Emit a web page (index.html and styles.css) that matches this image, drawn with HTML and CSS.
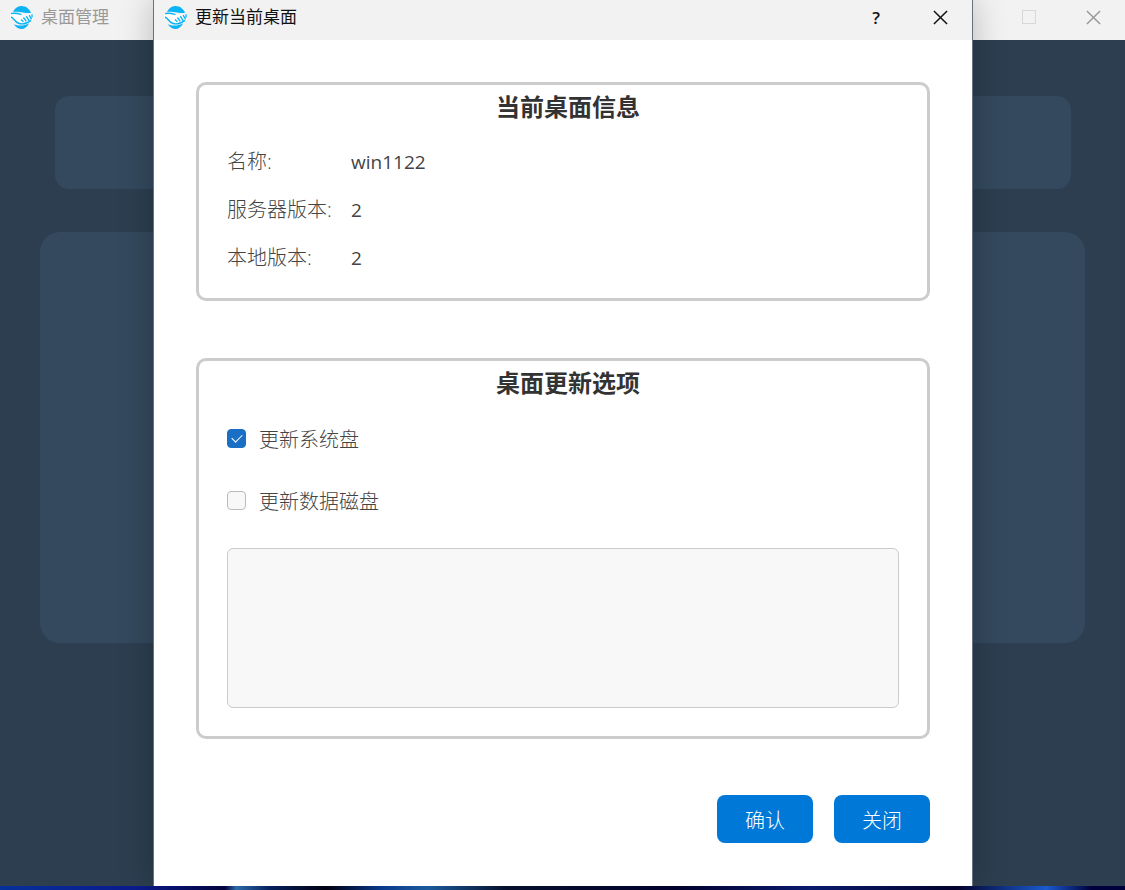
FILE: index.html
```html
<!DOCTYPE html>
<html lang="zh-CN">
<head>
  <meta charset="UTF-8">
  <meta name="viewport" content="width=device-width, initial-scale=1.0">
  <title>桌面管理</title>
  <link rel="stylesheet" href="styles.css">
</head>
<body>
  <svg class="symbols" aria-hidden="true">
    <symbol id="logo" viewBox="0 0 24 24">
      <path d="M3 6C6 1 10 0 12 0C17 0 20 3 22 7C18 8 15 7 12 6.500C9 6 6 6 3 6Z" fill="#0bb4f5"/>
      <path d="M4 19C8 21 15 21 20 18C18 22 15 24 12 24C9 24 6 22 4 19Z" fill="#0bb4f5"/>
      <path d="M0 8C5 6 10 7 14 8.500C18 10 21 9 24 8V15C19 19 11 20 7 17C5 15 3 12 0 12Z" fill="#fff"/>
      <path d="M1 8C5 7 9 8 12 9M1 11.500C4 12 5 17 9 18C13 19.500 18 18 22 15M11.500 14L14 16.500M14 12L17 16M17 10.500L20 15.500M20 9.500L22.500 14M23 8.500V12" fill="none" stroke="#0bb4f5" stroke-width="1.400"/>
    </symbol>
    <symbol id="cross" viewBox="0 0 16 16">
      <path d="M1 1L15 15M15 1L1 15" fill="none" stroke="currentColor" stroke-width="1.6"/>
    </symbol>
  </svg>

  <!-- 主窗口 -->
  <div class="window">
    <header class="titlebar inactive">
      <svg class="logo"><use href="#logo"/></svg>
      <span class="title">桌面管理</span>
      <button class="win-btn" aria-label="最大化"><span class="square"></span></button>
      <button class="win-btn" aria-label="关闭主窗口"><svg class="icon"><use href="#cross"/></svg></button>
    </header>
    <main class="workspace">
      <div class="card card-top"></div>
      <div class="card card-main"></div>
    </main>

    <!-- 更新对话框 -->
    <form class="dialog" role="dialog" aria-label="更新当前桌面">
      <header class="titlebar">
        <svg class="logo"><use href="#logo"/></svg>
        <span class="title">更新当前桌面</span>
        <button type="button" class="win-btn help" aria-label="帮助">?</button>
        <button type="button" class="win-btn" aria-label="关闭对话框"><svg class="icon"><use href="#cross"/></svg></button>
      </header>
      <div class="dialog-body">
        <section class="group">
          <h2>当前桌面信息</h2>
          <dl class="info">
            <dt>名称:</dt><dd>win1122</dd>
            <dt>服务器版本:</dt><dd>2</dd>
            <dt>本地版本:</dt><dd>2</dd>
          </dl>
        </section>
        <section class="group options">
          <h2>桌面更新选项</h2>
          <label class="check"><input type="checkbox" checked>更新系统盘</label>
          <label class="check"><input type="checkbox">更新数据磁盘</label>
          <textarea aria-label="更新日志" readonly></textarea>
        </section>
        <div class="actions">
          <button type="button" class="btn">确认</button>
          <button type="button" class="btn">关闭</button>
        </div>
      </div>
    </form>
  </div>
  <div class="wallpaper"></div>
</body>
</html>
```
FILE: styles.css
```css
* {
  box-sizing: border-box;
}

body {
  margin: 0;
  min-height: 100vh;
  display: flex;
  flex-direction: column;
  font-family: "Open Sans", "Noto Sans CJK SC", sans-serif;
  font-size: 20px;
  font-weight: 300;
  color: #444;
}

button, textarea {
  font: inherit;
}

.symbols {
  position: absolute;
  width: 0;
  height: 0;
}

.window {
  position: relative;
  flex: 1;
  display: flex;
  flex-direction: column;
  overflow: hidden;
  background-color: #2c3e50;
}

.wallpaper {
  height: 4px;
  background: linear-gradient(90deg, #06309a 0%, #0a1a8c 12%, #03043c 20%, #2c6aa8 21%, #06205c 24%, #000010 29%, #0a3a8c 34%, #1c5a9c 38%, #06102c 45%, #00002c 60%, #0a1a6c 72%, #02022c 85%, #1a5ad0 93%, #00003c 97%);
}

/* 标题栏 */
.titlebar {
  display: flex;
  align-items: center;
  height: 40px;
  padding-left: 10px;
  padding-bottom: 6px;
  background-color: #f2f2f2;
  color: #111;
  font-size: 17px;
  font-weight: 400;
}

.titlebar.inactive {
  color: #999;
}

.logo {
  width: 23px;
  height: 23px;
  margin-right: 8px;
}

.title {
  flex: 1;
  padding-bottom: 4px;
}

.win-btn {
  display: flex;
  align-items: center;
  justify-content: center;
  width: 64px;
  height: 34px;
  padding: 0;
  border: none;
  background: none;
  color: inherit;
}

.help {
  font-weight: 600;
}

.icon {
  width: 15px;
  height: 15px;
}

.square {
  width: 14px;
  height: 14px;
  border: 1px solid #d8d8d8;
}

/* 背景卡片 */
.workspace {
  padding: 56px 40px 0;
}

.card {
  background-color: #34495e;
}

.card-top {
  height: 93px;
  margin: 0 14px 43px 15px;
  border-radius: 14px;
}

.card-main {
  height: 411px;
  border-radius: 20px;
}

/* 对话框 */
.dialog {
  position: absolute;
  top: 0;
  bottom: 0;
  left: 154px;
  right: 153px;
  background-color: #fff;
  box-shadow: 0 0 0 1px #66727d, 0 0 32px rgba(0, 0, 0, 0.25);
}

.dialog-body {
  padding: 42px 42px 0;
}

.group {
  margin-bottom: 57px;
  padding: 0 28px 16px;
  border: 3px solid #ccc;
  border-radius: 10px;
}

h2 {
  margin: 0;
  padding: 0 0 9px 10px;
  font-size: 24px;
  line-height: 44px;
  font-weight: 700;
  text-align: center;
  color: #333;
}

.info {
  display: grid;
  grid-template-columns: 124px 1fr;
  margin: 0;
  line-height: 48px;
}

.info dd {
  margin: 0;
  font-size: 19px;
  font-weight: 400;
}

.options {
  margin-bottom: 56px;
  padding-bottom: 28px;
}

.check {
  display: flex;
  align-items: center;
  gap: 13px;
  height: 48px;
  margin-bottom: 14px;
}

.check input {
  display: flex;
  align-items: center;
  justify-content: center;
  appearance: none;
  width: 19px;
  height: 19px;
  margin: 0;
  border: 1px solid #bbb;
  border-radius: 4px;
  background-color: #f8f8f8;
}

.check input:checked {
  border-color: #1a6fc4;
  background-color: #1a6fc4;
}

.check input:checked::before {
  content: "";
  width: 9px;
  height: 5px;
  margin-bottom: 3px;
  border-left: 1px solid #fff;
  border-bottom: 1px solid #fff;
  transform: rotate(-45deg);
}

textarea {
  display: block;
  width: 100%;
  height: 160px;
  margin-top: 24px;
  border: 1px solid #ccc;
  border-radius: 6px;
  background-color: #f8f8f8;
  resize: none;
}

.actions {
  display: flex;
  justify-content: flex-end;
  gap: 21px;
}

.btn {
  width: 96px;
  height: 48px;
  padding: 0;
  border: none;
  border-radius: 8px;
  background-color: #0078d7;
  color: #fff;
}
```
